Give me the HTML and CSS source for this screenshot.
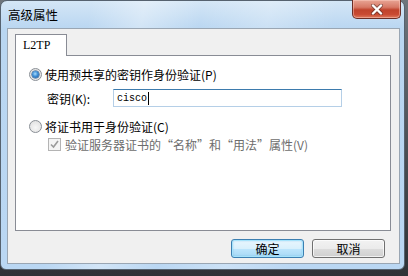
FILE: index.html
```html
<!DOCTYPE html>
<html lang="zh-CN">
<head>
<meta charset="utf-8">
<title>高级属性</title>
<link rel="stylesheet" href="styles.css">
</head>
<body>
<div class="window">
  <div class="titlebar">
    <span class="title">高级属性</span>
    <div class="close">
      <svg width="12" height="11" viewBox="0 0 12 11">
        <path d="M2 1.5 L10 9.5 M10 1.5 L2 9.5" stroke="#4a2a26" stroke-width="4" stroke-linecap="round" opacity="0.55"/>
        <path d="M2 1.5 L10 9.5 M10 1.5 L2 9.5" stroke="#ffffff" stroke-width="2.4" stroke-linecap="round"/>
      </svg>
    </div>
  </div>
  <div class="client">
    <div class="tabs"><div class="tab">L2TP</div></div>
    <div class="panel">
      <div class="opt"><span class="radio checked"></span><span class="txt">使用预共享的密钥作身份验证(P)</span></div>
      <div class="keyrow">
        <span class="keylabel">密钥(K):</span>
        <div class="input"><span class="mono">cisco</span><span class="caret"></span></div>
      </div>
      <div class="opt opt2"><span class="radio"></span><span class="txt">将证书用于身份验证(C)</span></div>
      <div class="chk">
        <span class="checkbox">
          <svg width="11" height="11" viewBox="0 0 11 11"><path d="M2 5.5 L4.5 8 L9 2" fill="none" stroke="#9a9a9a" stroke-width="1.6"/></svg>
        </span>
        <span class="txt disabled">验证服务器证书的“名称”和“用法”属性(V)</span>
      </div>
    </div>
    <div class="buttons">
      <button class="btn default">确定</button>
      <button class="btn">取消</button>
    </div>
  </div>
</div>
</body>
</html>
```
FILE: styles.css
```css
* { box-sizing: border-box; }
html, body {
  margin: 0;
  padding: 0;
  width: 408px;
  height: 276px;
  overflow: hidden;
  background: linear-gradient(to bottom, #6e757c 0, #474b50 60%, #2f3236 100%);
  font-family: "Noto Sans CJK SC", "Noto Sans", sans-serif;
  font-size: 12px;
  color: #000;
}
.window {
  width: 405px;
  height: 270px;
  border: 1px solid #56626f;
  border-radius: 7px 7px 6px 6px;
  background:
    linear-gradient(100deg, rgba(255,255,255,0) 20%, rgba(255,255,255,0.35) 32%, rgba(255,255,255,0) 45%, rgba(255,255,255,0.25) 60%, rgba(255,255,255,0) 75%),
    linear-gradient(to bottom, #d4e6f6 0, #b9d6f1 28px, #bad7f3 100%);
  padding: 0 4px 5px 6px;
  display: flex;
  flex-direction: column;
}
.titlebar {
  height: 27px;
  display: flex;
  justify-content: space-between;
  align-items: flex-start;
}
.title {
  margin: 6px 0 0 1px;
  font-size: 12.5px;
  line-height: 16px;
  color: #000;
}
.close {
  width: 49px;
  height: 19px;
  margin: -1px -1px 0 0;
  border: 1px solid #6b2e26;
  border-top: none;
  border-radius: 0 0 5px 5px;
  background: linear-gradient(to bottom, #e8a595 0, #d77966 40%, #c0432c 55%, #c94a32 80%, #de7a5e 100%);
  box-shadow: inset 0 0 0 1px rgba(255,210,200,0.45);
  display: flex;
  align-items: center;
  justify-content: center;
}
.client {
  height: 236px;
  border: 1px solid #9aa6b3;
  background: #f0f0f0;
  padding: 5px 8px 0 7px;
  display: flex;
  flex-direction: column;
}
.tabs {
  display: flex;
  position: relative;
  z-index: 1;
}
.tab {
  width: 52px;
  height: 22px;
  margin-bottom: -1px;
  border: 1px solid #898c95;
  border-bottom: none;
  background: #fff;
  padding: 3px 0 0 7px;
  font-family: "Liberation Serif", serif;
  font-size: 12px;
  line-height: 14px;
}
.panel {
  height: 176px;
  border: 1px solid #898c95;
  background: #fff;
  padding: 12px 0 0 13px;
  display: flex;
  flex-direction: column;
}
.opt {
  display: flex;
  align-items: center;
  height: 13px;
}
.opt2 { margin-top: 13px; }
.txt {
  margin-left: 3px;
  line-height: 13px;
  white-space: nowrap;
}
.radio {
  width: 13px;
  height: 13px;
  border-radius: 50%;
  border: 1px solid #8a8f96;
  background: radial-gradient(circle at 50% 60%, #f7f7f7 0, #dcdcdc 100%);
  flex: none;
  display: flex;
  align-items: center;
  justify-content: center;
}
.radio.checked::after {
  content: "";
  width: 7px;
  height: 7px;
  border-radius: 50%;
  background: radial-gradient(circle at 45% 40%, #a9dcfb 0, #3e8ed6 45%, #1b4f8c 100%);
  box-shadow: 0 0 0 0.5px #1d4b7e;
}
.keyrow {
  display: flex;
  align-items: center;
  margin-top: 8px;
  height: 18px;
  padding-left: 18px;
}
.keylabel {
  width: 66px;
  line-height: 13px;
  white-space: nowrap;
}
.input {
  width: 229px;
  height: 18px;
  border: 1px solid #b5cfe7;
  border-top-color: #3d7bad;
  background: #fff;
  padding-left: 3px;
  display: flex;
  align-items: center;
}
.mono {
  font-family: "Liberation Mono", monospace;
  font-size: 10px;
  line-height: 13px;
}
.caret {
  width: 1px;
  height: 13px;
  background: #000;
  margin-left: 1px;
}
.chk {
  display: flex;
  align-items: center;
  margin-top: 5px;
  padding-left: 19px;
  height: 13px;
}
.checkbox {
  width: 13px;
  height: 13px;
  border: 1px solid #b4b4b4;
  background: #f4f4f4;
  flex: none;
  display: flex;
  align-items: center;
  justify-content: center;
}
.chk .txt { margin-left: 4px; }
.disabled { color: #6d6d6d; }
.buttons {
  display: flex;
  justify-content: flex-end;
  gap: 8px;
  margin-top: 8px;
  padding-right: 6px;
}
.btn {
  width: 73px;
  height: 19px;
  padding: 0;
  border: 1px solid #707070;
  border-radius: 3px;
  background: linear-gradient(to bottom, #f2f2f2 0, #ebebeb 50%, #dddddd 50%, #cfcfcf 100%);
  box-shadow: inset 0 0 0 1px rgba(255,255,255,0.7);
  font-family: "Noto Sans CJK SC", sans-serif;
  font-size: 12px;
  line-height: 15px;
  color: #000;
}
.btn.default {
  border-color: #3c7fb1;
  background: linear-gradient(to bottom, #eaf6fd 0, #d9f0fc 50%, #bee6fd 50%, #a7d9f5 100%);
  box-shadow: inset 0 0 0 1px #a6e3fb, inset 0 0 2px 1px rgba(60,160,220,0.35);
}
```
